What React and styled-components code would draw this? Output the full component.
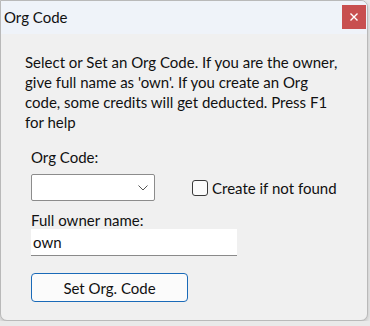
import styled, { createGlobalStyle } from "styled-components";

const GlobalStyle = createGlobalStyle`
  html, body {
    margin: 0;
    padding: 0;
    background: #e9e9e9;
  }
  body {
    font-family: Lato, "Noto Sans", sans-serif;
    color: #111;
  }
`;

const Window = styled.div`
  width: 366px;
  height: 319px;
  display: flex;
  flex-direction: column;
  background: #f0f0f0;
  border: 1px solid #b9b9b9;
  border-radius: 0 7px 7px 7px;
  box-shadow: 0 2px 4px rgba(0, 0, 0, 0.18);
  overflow: hidden;
`;

const TitleBar = styled.div`
  height: 33px;
  flex: none;
  display: flex;
  align-items: flex-start;
  justify-content: space-between;
  background: #eff3f9;
  padding-left: 3px;
`;

const Title = styled.div`
  font-size: 15px;
  line-height: 33px;
`;

const CloseButton = styled.div`
  width: 24px;
  height: 24px;
  margin: 4px 1px 0 0;
  display: flex;
  align-items: center;
  justify-content: center;
  background: #c84f4f;
  color: #fff;
`;

const Body = styled.div`
  padding: 18px 20px 0 24px;
  display: flex;
  flex-direction: column;
`;

const Intro = styled.p`
  margin: 0;
  font-size: 15px;
  line-height: 20px;
`;

const Form = styled.div`
  margin: 15px 0 0 6px;
  display: flex;
  flex-direction: column;
`;

const Label = styled.div`
  font-size: 15px;
  line-height: 20px;
  margin-top: ${({ $top }) => $top || 0}px;
`;

const Row = styled.div`
  display: flex;
  align-items: center;
  gap: 37px;
  margin-top: 7px;
`;

const Combo = styled.div`
  width: 116px;
  height: 25px;
  display: flex;
  align-items: center;
  justify-content: flex-end;
  padding-right: 6px;
  box-sizing: content-box;
  background: #fff;
  border: 1px solid #8c8c8c;
  border-radius: 2px;
`;

const Check = styled.label`
  display: flex;
  align-items: center;
  gap: 4px;
  font-size: 15px;
  white-space: nowrap;
`;

const Box = styled.span`
  width: 14px;
  height: 14px;
  border: 1px solid #3a3a3a;
  border-radius: 3px;
  background: #fbfbfb;
`;

const TextInput = styled.div`
  width: 204px;
  height: 26px;
  margin-top: -1px;
  padding-left: 2px;
  background: #fff;
  border-bottom: 1px solid #8a8a8a;
  font-size: 15px;
  line-height: 26px;
`;

const Button = styled.div`
  width: 155px;
  height: 27px;
  margin-top: 17px;
  display: flex;
  align-items: center;
  justify-content: center;
  background: #fbfbfb;
  border: 1px solid #1a6ab8;
  border-radius: 4px;
  font-size: 15px;
`;

export default function App() {
  return (
    <>
      <GlobalStyle />
      <Window>
        <TitleBar>
          <Title>Org Code</Title>
          <CloseButton>
            <svg width="10" height="10" viewBox="0 0 10 10">
              <path d="M1.5 1.5 L8.5 8.5 M8.5 1.5 L1.5 8.5" stroke="#fff" strokeWidth="1.4" />
            </svg>
          </CloseButton>
        </TitleBar>
        <Body>
          <Intro>
            Select or Set an Org Code. If you are the owner, give full name as
            'own'. If you create an Org code, some credits will get deducted.
            Press F1 for help
          </Intro>
          <Form>
            <Label>Org Code:</Label>
            <Row>
              <Combo>
                <svg width="10" height="6" viewBox="0 0 10 6">
                  <path d="M0.5 0.5 L5 5 L9.5 0.5" fill="none" stroke="#555" strokeWidth="1" />
                </svg>
              </Combo>
              <Check>
                <Box />
                Create if not found
              </Check>
            </Row>
            <Label $top={9}>Full owner name:</Label>
            <TextInput>own</TextInput>
            <Button>Set Org. Code</Button>
          </Form>
        </Body>
      </Window>
    </>
  );
}
